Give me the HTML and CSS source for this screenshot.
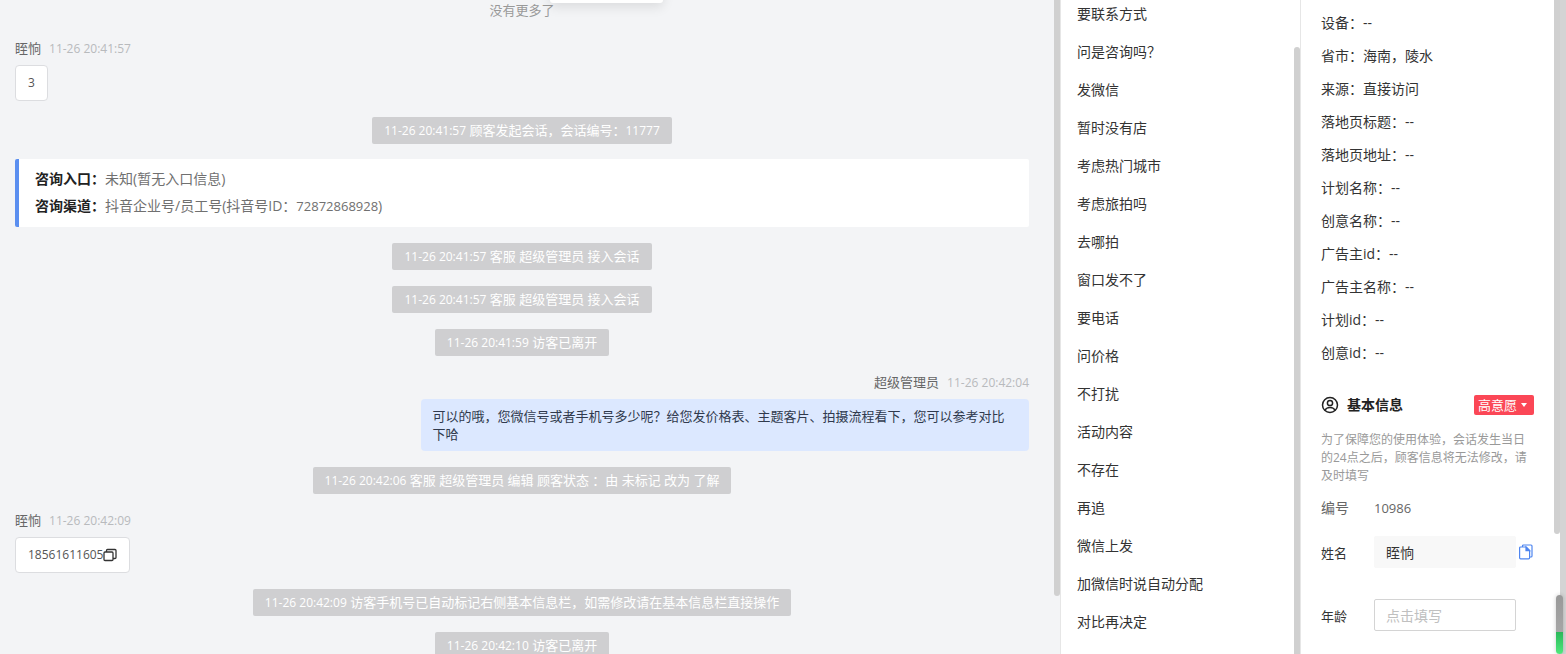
FILE: index.html
```
<!DOCTYPE html>
<html lang="zh-CN">
<head>
    <meta charset="UTF-8">
    <meta name="viewport" content="width=device-width, initial-scale=1.0">
    <title>会话</title>
    <link rel="stylesheet" href="styles.css">
</head>
<body>
    <div class="page">
        <!-- Chat -->
        <main class="chat">
            <div class="top-popup"></div>
            <p class="no-more">没有更多了</p>

            <div class="message">
                <div class="message-head"><span>眰恦</span><time class="time">11-26 20:41:57</time></div>
                <div class="bubble"><span class="num">3</span></div>
            </div>

            <p class="notice"><time class="num">11-26 20:41:57</time> 顾客发起会话，会话编号：<span class="num">11777</span></p>

            <div class="entry-card">
                <p><b>咨询入口：</b>未知(暂无入口信息)</p>
                <p><b>咨询渠道：</b>抖音企业号/员工号(抖音号ID：<span class="num">72872868928</span>)</p>
            </div>

            <p class="notice"><time class="num">11-26 20:41:57</time> 客服 超级管理员 接入会话</p>
            <p class="notice"><time class="num">11-26 20:41:57</time> 客服 超级管理员 接入会话</p>
            <p class="notice"><time class="num">11-26 20:41:59</time> 访客已离开</p>

            <div class="message message-self">
                <div class="message-head"><span>超级管理员</span><time class="time">11-26 20:42:04</time></div>
                <div class="bubble">可以的哦，您微信号或者手机号多少呢？给您发价格表、主题客片、拍摄流程看下，您可以参考对比下哈</div>
            </div>

            <p class="notice"><time class="num">11-26 20:42:06</time> 客服 超级管理员 编辑 顾客状态 ：由 未标记 改为 了解</p>

            <div class="message">
                <div class="message-head"><span>眰恦</span><time class="time">11-26 20:42:09</time></div>
                <div class="bubble">
                    <span class="num">18561611605</span>
                    <button class="copy-btn" type="button" aria-label="复制">
                        <svg width="14" height="14" viewBox="0 0 14 14" fill="none" stroke="#333" stroke-width="1.3">
                            <rect x="1" y="4" width="9" height="8.500" rx="1"/>
                            <path d="M3.500 4V2.500a1 1 0 0 1 1-1H12a1 1 0 0 1 1 1v7a1 1 0 0 1-1 1h-2"/>
                        </svg>
                    </button>
                </div>
            </div>

            <p class="notice"><time class="num">11-26 20:42:09</time> 访客手机号已自动标记右侧基本信息栏，如需修改请在基本信息栏直接操作</p>
            <p class="notice"><time class="num">11-26 20:42:10</time> 访客已离开</p>
            <div class="scroll-thumb chat-thumb"></div>
        </main>

        <!-- Quick replies -->
        <aside class="replies">
            <ul>
                <li>要联系方式</li>
                <li>问是咨询吗？</li>
                <li>发微信</li>
                <li>暂时没有店</li>
                <li>考虑热门城市</li>
                <li>考虑旅拍吗</li>
                <li>去哪拍</li>
                <li>窗口发不了</li>
                <li>要电话</li>
                <li>问价格</li>
                <li>不打扰</li>
                <li>活动内容</li>
                <li>不存在</li>
                <li>再追</li>
                <li>微信上发</li>
                <li>加微信时说自动分配</li>
                <li>对比再决定</li>
            </ul>
            <div class="scroll-thumb replies-thumb"></div>
        </aside>

        <!-- Customer info -->
        <aside class="info">
            <ul class="info-list">
                <li>设备：--</li>
                <li>省市：海南，陵水</li>
                <li>来源：直接访问</li>
                <li>落地页标题：--</li>
                <li>落地页地址：--</li>
                <li>计划名称：--</li>
                <li>创意名称：--</li>
                <li>广告主id：--</li>
                <li>广告主名称：--</li>
                <li>计划id：--</li>
                <li>创意id：--</li>
            </ul>

            <div class="info-title">
                <svg width="18" height="18" viewBox="0 0 18 18" fill="none" stroke="#222" stroke-width="1.5">
                    <circle cx="9" cy="9" r="7.5"/>
                    <circle cx="9" cy="7" r="2.6"/>
                    <path d="M4 14.500c.7-2 2.600-3 5-3s4.300 1 5 3"/>
                </svg>
                <h2>基本信息</h2>
                <div class="intent">
                    <select aria-label="意愿">
                        <option>高意愿</option>
                    </select>
                    <svg width="6" height="4" viewBox="0 0 6 4"><path d="M0 0h6L3 4z" fill="#fff"/></svg>
                </div>
            </div>
            <p class="tip">为了保障您的使用体验，会话发生当日的24点之后，顾客信息将无法修改，请及时填写</p>

            <div class="field field-id">
                <span class="field-label">编号</span>
                <span class="field-value">10986</span>
            </div>
            <div class="field">
                <label class="field-label" for="name">姓名</label>
                <input class="filled" type="text" id="name" value="眰恦">
                <button class="copy-btn" type="button" aria-label="复制姓名">
                    <svg width="14" height="16" viewBox="0 0 14 16" fill="none" stroke="#4f86f0" stroke-width="1.2">
                        <path d="M3.500 3V2a1 1 0 0 1 1-1H12a1 1 0 0 1 1 1v10a1 1 0 0 1-1 1h-1.500"/>
                        <path d="M1.600 3h5.600l3.400 3.400v7.400a1 1 0 0 1-1 1h-8a1 1 0 0 1-1-1V4a1 1 0 0 1 1-1z"/>
                        <path d="M7 3v3.600h3.600z" fill="#4f86f0"/>
                    </svg>
                </button>
            </div>
            <div class="field">
                <label class="field-label" for="age">年龄</label>
                <input type="text" id="age" placeholder="点击填写">
            </div>
            <div class="scroll-thumb info-thumb"></div>
        </aside>

        <div class="edge"></div>
        <div class="meter"></div>
    </div>
</body>
</html>
```
FILE: styles.css
```
* {
    margin: 0;
    padding: 0;
    box-sizing: border-box;
}

body {
    font-family: "Open Sans", "Noto Sans CJK SC", sans-serif;
    font-size: 14px;
    color: #333;
    background: #fff;
    overflow: hidden;
}

ul {
    list-style: none;
}

button {
    border: none;
    background: none;
    cursor: pointer;
}

.page {
    display: flex;
    height: 100vh;
    position: relative;
}

.scroll-thumb {
    position: absolute;
    right: 0;
    width: 6px;
    background: #d0d0d0;
}

/* Chat */
.chat {
    flex: 1;
    min-width: 0;
    position: relative;
    display: flex;
    flex-direction: column;
    padding: 0 31px 0 15px;
    font-size: 13px;
    background: #f3f4f6;
    overflow: hidden;
}

.chat > * {
    flex-shrink: 0;
}

.chat-thumb {
    top: 0;
    height: 596px;
    border-radius: 0 0 3px 3px;
}

.top-popup {
    position: absolute;
    top: -17px;
    left: 550px;
    width: 113px;
    height: 20px;
    background: #fff;
    border-radius: 3px;
    box-shadow: 0 4px 12px rgba(0, 0, 0, 0.1);
}

.no-more {
    margin-bottom: 18px;
    line-height: 20px;
    text-align: center;
    color: #999;
}

.message {
    display: flex;
    flex-direction: column;
    align-items: flex-start;
    margin-bottom: 16px;
}

.message-head {
    display: flex;
    gap: 8px;
    margin-bottom: 6px;
    line-height: 21px;
    color: #666;
}

.time {
    font-size: 12px;
    color: #b8babd;
}

.num {
    font-size: 12px;
    line-height: 1;
}

.bubble {
    display: flex;
    align-items: center;
    height: 36px;
    padding: 0 12px;
    line-height: 18px;
    color: #555;
    background: #fff;
    border: 1px solid #dcdde0;
    border-radius: 4px;
}

.message-self {
    align-items: flex-end;
}

.message-self .bubble {
    max-width: 60%;
    height: auto;
    padding: 8px 24px 8px 12px;
    color: #303a4d;
    background: #dce8ff;
    border: none;
}

.copy-btn {
    display: flex;
}

.notice {
    align-self: center;
    margin-bottom: 16px;
    padding: 4px 12px;
    line-height: 19px;
    color: #fff;
    background: #cfcfd1;
    border-radius: 2px;
}

.entry-card {
    margin: -1px 0 16px;
    padding: 6px 16px 8px;
    font-size: 14px;
    line-height: 27px;
    color: #707070;
    background: #fff;
    border-left: 4px solid #5b8ff0;
    border-radius: 2px;
}

.entry-card b {
    color: #222;
}

.entry-card .num {
    font-size: 13px;
}

/* Quick replies */
.replies {
    position: relative;
    width: 241px;
    padding-left: 16px;
    border-left: 1px solid #e6e6e6;
    border-right: 1px solid #e6e6e6;
    overflow: hidden;
}

.replies ul {
    margin-top: -5px;
}

.replies li {
    line-height: 38px;
}

.replies-thumb {
    top: 47px;
    bottom: 0;
    border-radius: 3px 3px 0 0;
}

/* Customer info */
.info {
    position: relative;
    width: 259px;
    padding: 6px 26px 0 20px;
    overflow: hidden;
}

.info-thumb {
    top: 0;
    height: 534px;
    border-radius: 0 0 3px 3px;
}

.info-list li {
    line-height: 33px;
}

.info-title {
    display: flex;
    align-items: center;
    margin: 26px 0 16px;
}

.info-title h2 {
    flex: 1;
    margin-left: 8px;
    font-size: 14px;
    line-height: 20px;
    color: #222;
}

.intent {
    position: relative;
    width: 60px;
    height: 20px;
}

.intent select {
    width: 100%;
    height: 20px;
    padding: 0 4px;
    appearance: none;
    font: inherit;
    font-size: 13px;
    line-height: 20px;
    color: #fff;
    background: #fb4756;
    border: none;
    border-radius: 2px;
}

.intent svg {
    position: absolute;
    top: 8px;
    right: 7px;
    pointer-events: none;
}

.tip {
    font-size: 12px;
    line-height: 18px;
    color: #999;
}

.field {
    display: flex;
    align-items: center;
    margin-bottom: 31px;
}

.field-id {
    margin: 13px 0 18px;
    line-height: 20px;
    color: #666;
}

.field-label {
    width: 53px;
    font-size: 13px;
}

.field-id .field-label {
    font-size: 14px;
}

.field-value {
    font-size: 13px;
}

.field input {
    width: 142px;
    height: 32px;
    padding: 0 11px;
    font: inherit;
    color: #333;
    border: 1px solid #d4d4d4;
    border-radius: 2px;
}

.field .filled {
    background: #f8f8f8;
    border-color: #f8f8f8;
}

.field input::placeholder {
    color: #c0c0c0;
}

.field .copy-btn {
    margin-left: 3px;
}

/* Page edge */
.edge {
    width: 6px;
    background: #d4d4d4;
}

.meter {
    position: absolute;
    right: 3px;
    bottom: 0;
    width: 7px;
    height: 59px;
    background: linear-gradient(#999 0, #a6a6a6 37px, #2ab85a 37px, #4fe87c 100%);
    border-radius: 4px;
    box-shadow: 0 0 4px rgba(0, 0, 0, 0.2);
}
```
